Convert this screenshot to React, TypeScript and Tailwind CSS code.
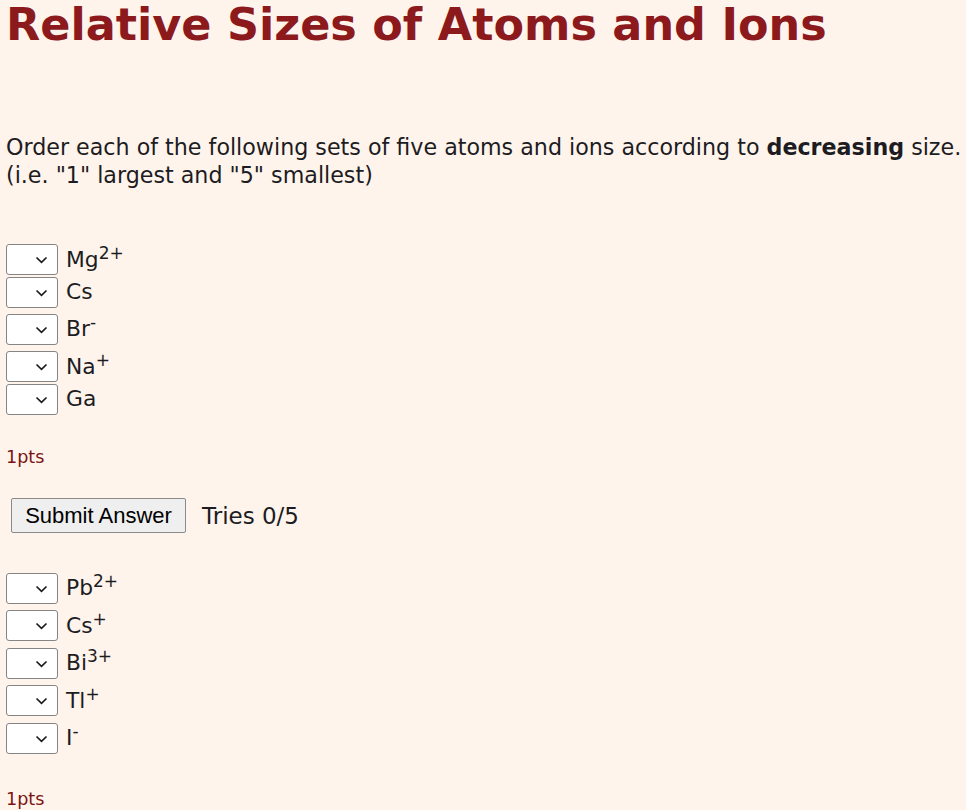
import React from "react";

type Species = { sym: string; charge?: string };

const setOne: Species[] = [
  { sym: "Mg", charge: "2+" },
  { sym: "Cs" },
  { sym: "Br", charge: "-" },
  { sym: "Na", charge: "+" },
  { sym: "Ga" },
];

const setTwo: Species[] = [
  { sym: "Pb", charge: "2+" },
  { sym: "Cs", charge: "+" },
  { sym: "Bi", charge: "3+" },
  { sym: "Tl", charge: "+" },
  { sym: "I", charge: "-" },
];

function RankSelect() {
  return (
    <div className="relative w-[52px] h-[31px] shrink-0">
      <select className="appearance-none w-full h-full bg-white border border-[#858585] rounded-[3px] outline-none text-[16px]">
        <option value=""></option>
        <option value="1">1</option>
        <option value="2">2</option>
        <option value="3">3</option>
        <option value="4">4</option>
        <option value="5">5</option>
      </select>
      <svg
        className="pointer-events-none absolute left-[29px] top-[12px]"
        width="13"
        height="8"
        viewBox="0 0 13 8"
      >
        <path d="M1.5 1.5 L6.5 6.3 L11.5 1.5" fill="none" stroke="#1a1a1a" strokeWidth="1.7" />
      </svg>
    </div>
  );
}

function Row({ s }: { s: Species }) {
  return (
    <div className={s.charge ? "flex items-start h-[37.5px] pt-[6px]" : "flex items-start h-[32px] pt-[1px]"}>
      <RankSelect />
      <div className="ml-[8px] h-[31px] flex items-center">
        <span className="text-[21.8px] leading-none">
          {s.sym}
          {s.charge && <sup className="text-[17px] top-[-0.45em]">{s.charge}</sup>}
        </span>
      </div>
    </div>
  );
}

export default function App() {
  return (
    <div
      className="min-h-[810px] bg-[#fff4ec] px-[6px] text-[#1c1c22] overflow-hidden"
      style={{ fontFamily: '"DejaVu Sans", Verdana, sans-serif' }}
    >
      <h1 className="text-[44.5px] leading-[50px] font-bold text-[#8c1a1c] whitespace-nowrap">
        Relative Sizes of Atoms and Ions
      </h1>

      <p className="mt-[83px] text-[22.2px] leading-[28px] whitespace-nowrap">
        Order each of the following sets of five atoms and ions according to <b className="font-bold">decreasing</b> size.
        <br />
        (i.e. "1" largest and "5" smallest)
      </p>

      <div className="mt-[49px]">
        {setOne.map((s) => (
          <Row key={s.sym + (s.charge ?? "")} s={s} />
        ))}
      </div>

      <div className="mt-[32px] text-[17.6px] leading-[20px] text-[#7a1414]">1pts</div>

      <div className="mt-[31px] flex items-center">
        <button
          className="ml-[5px] w-[175px] h-[35px] bg-[#efefef] border border-[#8a8a8a] rounded-[2px] text-[22px] text-black"
          style={{ fontFamily: '"Liberation Sans", Arial, sans-serif' }}
        >
          Submit Answer
        </button>
        <span className="ml-[16px] text-[23px] relative top-[1px]">Tries 0/5</span>
      </div>

      <div className="mt-[34px]">
        {setTwo.map((s) => (
          <Row key={s.sym + (s.charge ?? "")} s={s} />
        ))}
      </div>

      <div className="mt-[35px] text-[17.6px] leading-[20px] text-[#7a1414]">1pts</div>
    </div>
  );
}
